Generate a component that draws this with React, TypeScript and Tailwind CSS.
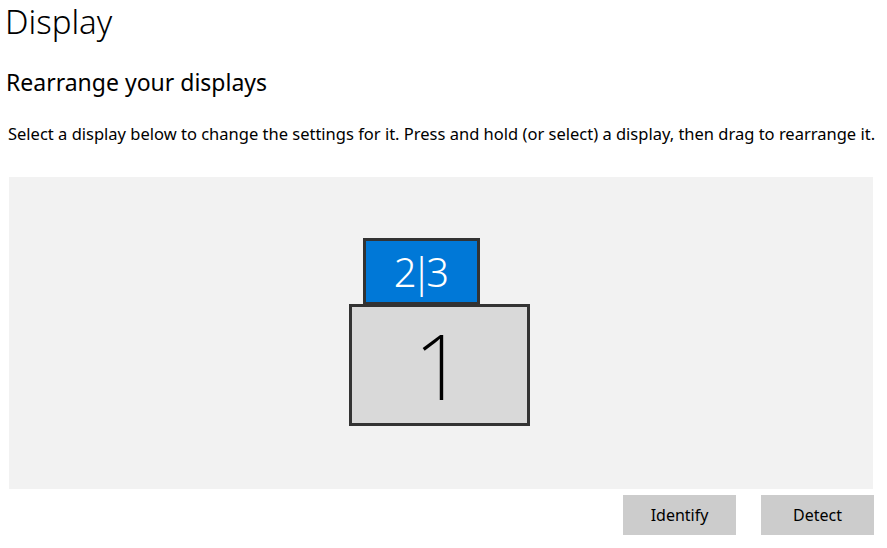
export default function App() {
  return (
    <div className="w-[887px] h-[548px] bg-white overflow-hidden text-black" style={{ fontFamily: '"Noto Sans", "Open Sans", sans-serif' }}>
      <h1 className="pl-[5px] pt-[2px] text-[33px] font-light leading-[40px]">Display</h1>
      <h2 className="pl-[6px] mt-[26px] text-[23px] leading-[28px]">Rearrange your displays</h2>
      <p className="pl-[8px] mt-[28px] text-[16.5px] leading-[20px]">
        Select a display below to change the settings for it. Press and hold (or select) a display, then drag to rearrange it.
      </p>
      <div className="relative ml-[9px] mt-[33px] w-[864px] h-[312px] bg-[#f2f2f2]">
        {/* display 2|3 */}
        <div className="absolute left-[354px] top-[61px] w-[117px] h-[67px] border-[3px] border-[#333] bg-[#0078d7] flex items-center justify-center">
          <span className="text-white text-[40px] font-light leading-none tracking-[-6px] pr-[6px]">2|3</span>
        </div>
        {/* display 1 */}
        <div className="absolute left-[340px] top-[127px] w-[181px] h-[122px] border-[3px] border-[#333] bg-[#d9d9d9] flex items-center justify-center">
          <span className="text-[90px] font-extralight leading-none">1</span>
        </div>
      </div>
      <div className="flex justify-end gap-[25px] pr-[13px] mt-[6px]">
        <button className="w-[113px] h-[40px] bg-[#cccccc] text-[16px]">Identify</button>
        <button className="w-[113px] h-[40px] bg-[#cccccc] text-[16px]">Detect</button>
      </div>
    </div>
  )
}
